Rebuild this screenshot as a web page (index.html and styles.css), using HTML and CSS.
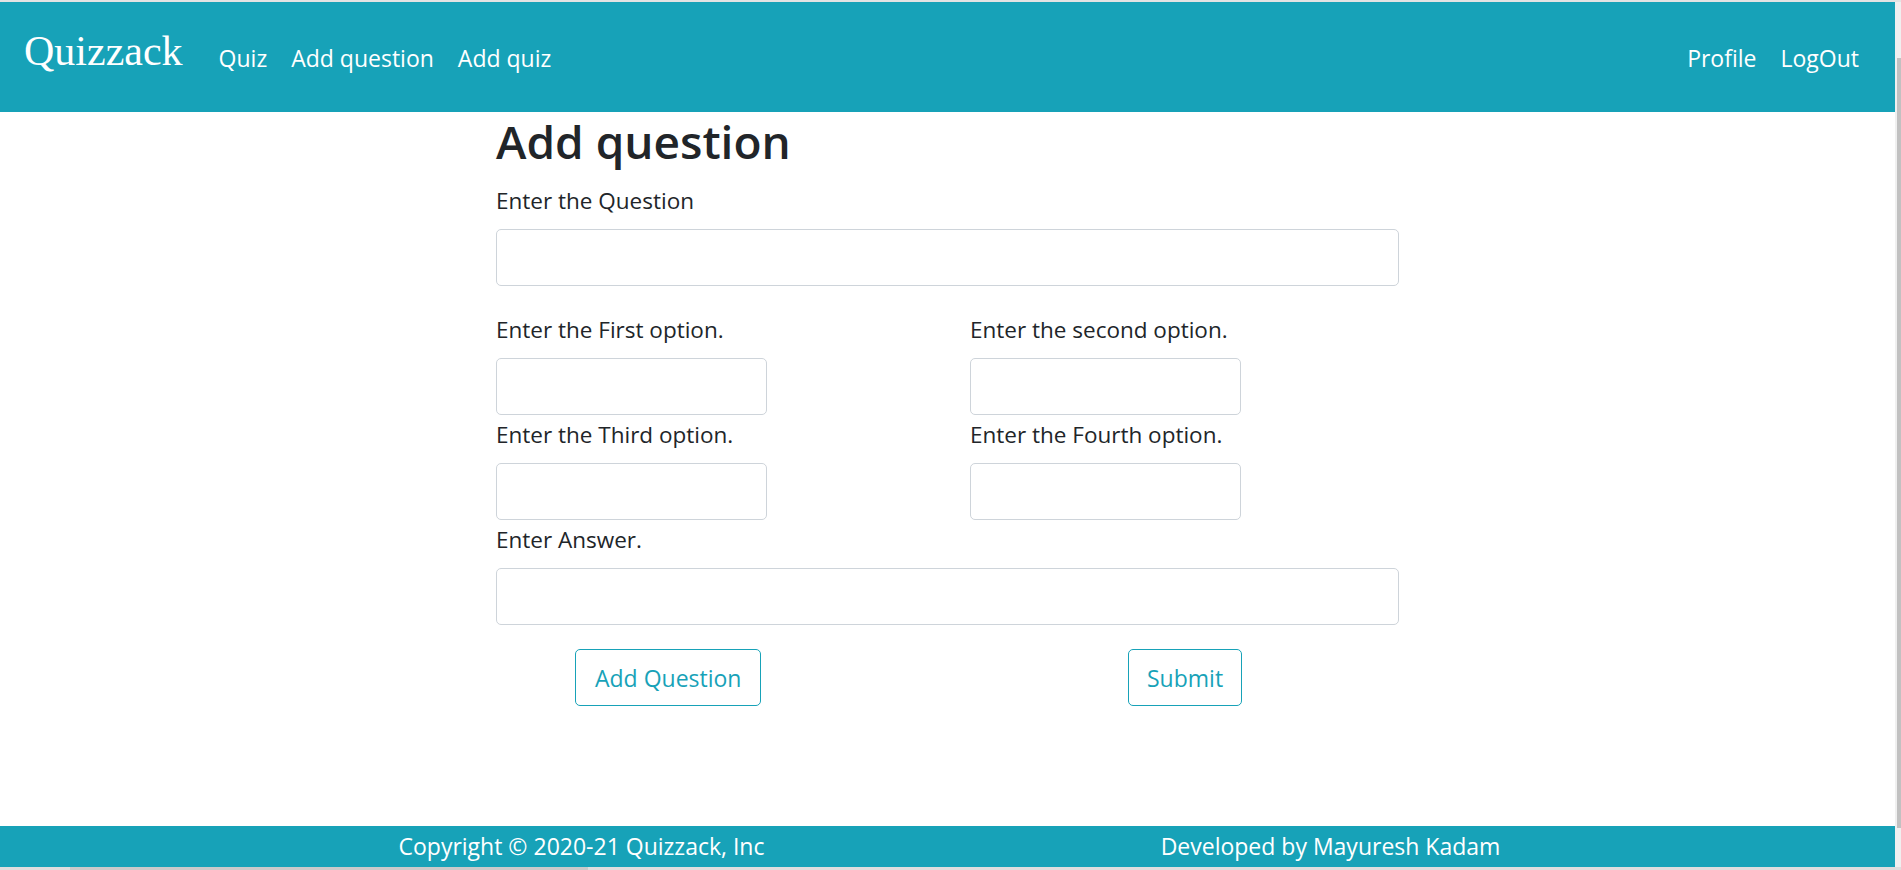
FILE: index.html
```html
<!DOCTYPE html>
<html lang="en">
<head>
<meta charset="utf-8">
<title>Quizzack - Add question</title>
<link rel="stylesheet" href="styles.css">
</head>
<body>
<div class="topline"></div>
<div class="frame">
  <div class="page">
    <nav class="navbar">
      <a class="brand" href="#">Quizzack</a>
      <a class="nav-link" href="#">Quiz</a>
      <a class="nav-link" href="#">Add question</a>
      <a class="nav-link" href="#">Add quiz</a>
      <div class="nav-right">
        <a class="nav-link" href="#">Profile</a>
        <a class="nav-link" href="#">LogOut</a>
      </div>
    </nav>
    <main class="main">
      <div class="container">
        <h1 class="title">Add question</h1>
        <div class="group group-question">
          <label class="label">Enter the Question</label>
          <input class="input input-wide" type="text">
        </div>
        <div class="options">
          <div class="group">
            <label class="label">Enter the First option.</label>
            <input class="input input-small" type="text">
          </div>
          <div class="group">
            <label class="label">Enter the second option.</label>
            <input class="input input-small" type="text">
          </div>
          <div class="group">
            <label class="label">Enter the Third option.</label>
            <input class="input input-small" type="text">
          </div>
          <div class="group">
            <label class="label">Enter the Fourth option.</label>
            <input class="input input-small" type="text">
          </div>
        </div>
        <div class="group group-answer">
          <label class="label">Enter Answer.</label>
          <input class="input input-wide" type="text">
        </div>
        <div class="actions">
          <div class="action-cell"><button class="btn btn-add" type="button">Add Question</button></div>
          <div class="action-cell"><button class="btn btn-submit" type="submit">Submit</button></div>
        </div>
      </div>
    </main>
    <footer class="footer">
      <div class="footer-inner">
        <div class="footer-col">Copyright © 2020-21 Quizzack, Inc</div>
        <div class="footer-col">Developed by Mayuresh Kadam</div>
      </div>
    </footer>
  </div>
  <div class="vscroll"><div class="vthumb"></div></div>
</div>
<div class="bottomline"><div class="hthumb"></div></div>
</body>
</html>
```
FILE: styles.css
```css
* { box-sizing: border-box; }

html, body {
  margin: 0;
  padding: 0;
  height: 870px;
  overflow: hidden;
}

body {
  display: flex;
  flex-direction: column;
  font-family: "Open Sans", "Noto Sans", sans-serif;
  color: #212529;
  background: #ffffff;
}

.topline {
  height: 2px;
  flex: none;
  background: #e3e3e3;
}

.frame {
  flex: 1;
  display: flex;
  min-height: 0;
}

.page {
  flex: 1;
  display: flex;
  flex-direction: column;
  min-width: 0;
}

.vscroll {
  width: 6px;
  flex: none;
  background: #f0f0f0;
  padding-top: 56px;
  padding-left: 2px;
}

.vthumb {
  width: 4px;
  height: 770px;
  background: #c1c1c1;
}

.bottomline {
  height: 3px;
  flex: none;
  background: #dedede;
  padding-left: 70px;
}

.hthumb {
  width: 518px;
  height: 3px;
  background: #cacaca;
}

/* Navbar */
.navbar {
  height: 110px;
  flex: none;
  background: #17a2b8;
  display: flex;
  align-items: center;
  padding: 0 24px;
}

.brand {
  font-family: "Liberation Serif", "Times New Roman", serif;
  font-size: 42px;
  line-height: 42px;
  color: #ffffff;
  text-decoration: none;
  margin-right: 24px;
  margin-bottom: 12px;
}

.nav-link {
  font-size: 23px;
  line-height: 34.5px;
  color: #ffffff;
  text-decoration: none;
  padding: 0 12px;
  margin-top: 2px;
}

.nav-right {
  margin-left: auto;
  display: flex;
  align-items: center;
}

/* Main */
.main {
  flex: 1;
}

.container {
  width: 903px;
  margin: 0 auto;
}

.title {
  font-size: 46px;
  line-height: 55px;
  font-weight: 600;
  margin: 2px 0 15px;
  color: #212529;
}

.label {
  display: block;
  font-size: 22.5px;
  line-height: 33px;
  margin-bottom: 12px;
}

.input {
  display: block;
  height: 57px;
  border: 1px solid #ced4da;
  border-radius: 5px;
  background: #ffffff;
  font: inherit;
  padding: 0 15px;
}

.input-wide { width: 903px; }
.input-small { width: 271px; }

.group-question { margin-bottom: 27px; }

.options {
  display: grid;
  grid-template-columns: 474px 1fr;
  row-gap: 3px;
  margin-bottom: 3px;
}

.actions {
  display: grid;
  grid-template-columns: 474px 1fr;
  margin-top: 24px;
}

.btn {
  height: 57px;
  padding: 0 19px;
  font-family: "Open Sans", "Noto Sans", sans-serif;
  font-size: 23px;
  color: #17a2b8;
  background: #ffffff;
  border: 1px solid #17a2b8;
  border-radius: 5px;
}

.btn-add { margin-left: 79px; }
.btn-submit { margin-left: 158px; padding: 0 18px; }

/* Footer */
.footer {
  height: 41px;
  flex: none;
  background: #17a2b8;
  color: #ffffff;
}

.footer-inner {
  width: 1498px;
  margin-left: 207px;
  display: grid;
  grid-template-columns: 1fr 1fr;
}

.footer-col {
  text-align: center;
  font-size: 23px;
  line-height: 40px;
  white-space: nowrap;
}
```
